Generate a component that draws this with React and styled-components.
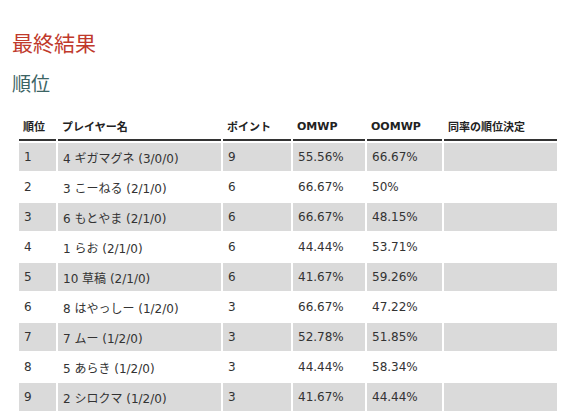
import React from 'react';
import styled, { createGlobalStyle } from 'styled-components';

const GlobalStyle = createGlobalStyle`
  body {
    margin: 0;
    background: #fff;
    font-family: "DejaVu Sans", "Noto Sans CJK JP", sans-serif;
    color: #333;
  }
`

const rows = [
  ['1', '4 ギガマグネ (3/0/0)', '9', '55.56%', '66.67%'],
  ['2', '3 こーねる (2/1/0)', '6', '66.67%', '50%'],
  ['3', '6 もとやま (2/1/0)', '6', '66.67%', '48.15%'],
  ['4', '1 らお (2/1/0)', '6', '44.44%', '53.71%'],
  ['5', '10 草稿 (2/1/0)', '6', '41.67%', '59.26%'],
  ['6', '8 はやっしー (1/2/0)', '3', '66.67%', '47.22%'],
  ['7', '7 ムー (1/2/0)', '3', '52.78%', '51.85%'],
  ['8', '5 あらき (1/2/0)', '3', '44.44%', '58.34%'],
  ['9', '2 シロクマ (1/2/0)', '3', '41.67%', '44.44%'],
]

const cols = [
  { label: '順位', width: 37 },
  { label: 'プレイヤー名', width: 163 },
  { label: 'ポイント', width: 68 },
  { label: 'OMWP', width: 72 },
  { label: 'OOMWP', width: 75 },
  { label: '同率の順位決定', width: 113 },
]

const App = () => {
  return (
    <Page>
      <GlobalStyle />
      <Title>最終結果</Title>
      <SubTitle>順位</SubTitle>
      <Table>
        <colgroup>
          {cols.map(c => <col key={c.label} style={{ width: c.width }} />)}
        </colgroup>
        <thead>
          <tr>
            {cols.map(c => <Th key={c.label}>{c.label}</Th>)}
          </tr>
        </thead>
        <tbody>
          {rows.map((r, i) => (
            <tr key={r[0]}>
              {r.map((v, j) => <Td key={j} $odd={i % 2 === 0}>{v}</Td>)}
              <Td $odd={i % 2 === 0}></Td>
            </tr>
          ))}
        </tbody>
      </Table>
    </Page>
  )
}

const Page = styled.div`
  padding: 27px 12px 0 12px;
`

const Title = styled.h1`
  margin: 0;
  font-family: "Noto Sans CJK JP", sans-serif;
  font-weight: 400;
  font-size: 21px;
  line-height: 30px;
  color: #c0392b;
`

const SubTitle = styled.h2`
  margin: 12px 0 0 0;
  font-family: "Noto Sans CJK JP", sans-serif;
  font-weight: 400;
  font-size: 19px;
  line-height: 28px;
  color: #3b6464;
`

const Table = styled.table`
  margin: 14px 0 0 5px;
  width: 542px;
  table-layout: fixed;
  border-collapse: separate;
  border-spacing: 2px;
`

const Th = styled.th`
  height: 26px;
  padding: 0 4px;
  text-align: left;
  vertical-align: middle;
  font-size: 11px;
  font-weight: bold;
  color: #222;
  border-bottom: 2px solid #333;
  white-space: nowrap;
`

const Td = styled.td`
  height: 28px;
  padding: 0 5px;
  font-size: 12px;
  color: #333;
  vertical-align: middle;
  white-space: nowrap;
  background: ${p => (p.$odd ? '#dadada' : '#fff')};
`

export default App;
